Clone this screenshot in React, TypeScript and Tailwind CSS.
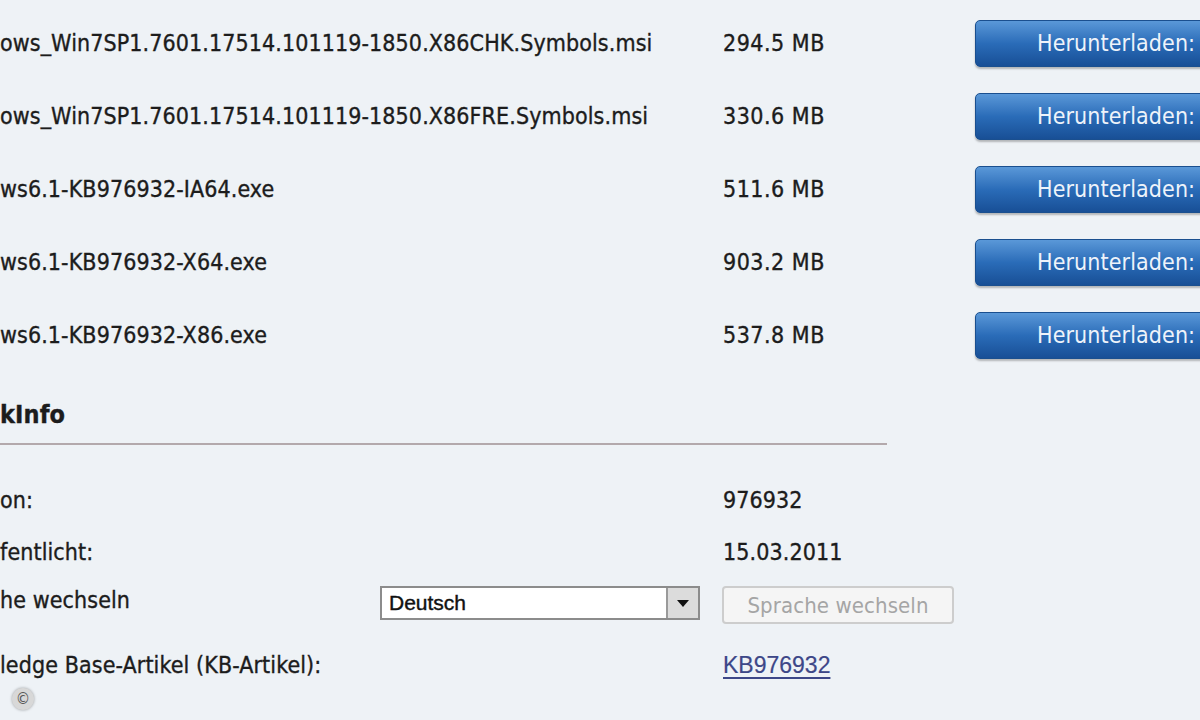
import type { ReactNode } from "react";

const files = [
    { name: "ows_Win7SP1.7601.17514.101119-1850.X86CHK.Symbols.msi", size: "294.5 MB" },
    { name: "ows_Win7SP1.7601.17514.101119-1850.X86FRE.Symbols.msi", size: "330.6 MB" },
    { name: "ws6.1-KB976932-IA64.exe", size: "511.6 MB" },
    { name: "ws6.1-KB976932-X64.exe", size: "903.2 MB" },
    { name: "ws6.1-KB976932-X86.exe", size: "537.8 MB" },
];

function DownloadButton() {
    return (
        <button className="flex h-[47px] w-[260px] shrink-0 items-center rounded-[5px] border border-[#1a4f8f] bg-gradient-to-b from-[#5a98d8] via-[#2a6cb8] to-[#184f96] pl-[61px] text-[23px] tracking-[0.1px] text-[#eef3fa] shadow-[0_2px_2px_rgba(0,0,0,0.25)] [-webkit-text-stroke:0px]">
            Herunterladen:
        </button>
    );
}

function InfoRow({ label, children, className }: { label: string; children: ReactNode; className: string }) {
    return (
        <div className={`flex items-center ${className}`}>
            <div className="w-[723px] shrink-0">{label}</div>
            <div>{children}</div>
        </div>
    );
}

export default function App() {
    return (
        <div
            className="h-[720px] w-[1200px] overflow-hidden bg-[#eef2f6] text-[23px] tracking-[0.1px] text-[#1c1c1c] [-webkit-text-stroke:0.35px_#1c1c1c]"
            style={{ fontFamily: '"DejaVu Sans Condensed", "DejaVu Sans", sans-serif' }}
        >
            <div className="pt-[7px]">
                {files.map((f) => (
                    <div key={f.name} className="flex h-[73px] items-center">
                        <div className="w-[723px] shrink-0 whitespace-nowrap">{f.name}</div>
                        <div className="w-[252px] shrink-0 tracking-[0.5px]">{f.size}</div>
                        <DownloadButton />
                    </div>
                ))}
            </div>

            <div className="mt-[28px] w-[887px]">
                <div className="text-[25px] font-bold leading-[30px]">kInfo</div>
                <div className="mt-[13px] h-[2px] bg-[#b3a9ac]" />
            </div>

            <InfoRow label="on:" className="mt-[40px] h-[30px]">976932</InfoRow>
            <InfoRow label="fentlicht:" className="mt-[22px] h-[30px]">15.03.2011</InfoRow>

            <div className="mt-[16px] flex h-[40px] items-center">
                <div className="-mt-[6px] w-[380px] shrink-0">he wechseln</div>
                <div className="flex h-[34px] w-[320px] shrink-0 border-2 border-[#8c8c8c] bg-white">
                    <div
                        className="flex flex-1 items-center pl-[7px] text-[21px] font-normal tracking-normal text-[#111] [-webkit-text-stroke:0.4px_#111]"
                        style={{ fontFamily: '"Liberation Sans", Arial, sans-serif' }}
                    >
                        Deutsch
                    </div>
                    <div className="flex w-[32px] items-center justify-center border-l-2 border-[#9a9a9a] bg-[#dcdcdc]">
                        <svg width="14" height="9" viewBox="0 0 14 9">
                            <path d="M1 1 L13 1 L7 8 Z" fill="#111" />
                        </svg>
                    </div>
                </div>
                <div className="w-[22px] shrink-0" />
                <button className="mt-[4px] flex h-[38px] w-[232px] items-center justify-center rounded-[4px] border-2 border-[#cdcdcd] bg-[#f5f5f5] text-[22px] text-[#a5a5a5] [-webkit-text-stroke:0px]">
                    Sprache wechseln
                </button>
            </div>

            <InfoRow label="ledge Base-Artikel (KB-Artikel):" className="mt-[27px] h-[30px]">
                <span
                    className="text-[23px] tracking-normal text-[#3d4788] underline decoration-2 underline-offset-[4px] [-webkit-text-stroke:0.2px_#3d4788]"
                    style={{ fontFamily: '"Liberation Sans", Arial, sans-serif' }}
                >
                    KB976932
                </span>
            </InfoRow>

            <div className="ml-[12px] mt-[8px] flex h-[22px] w-[22px] items-center justify-center rounded-full bg-[#d8d8d8] text-[16px] leading-none tracking-normal text-[#555] shadow-[0_0_3px_rgba(0,0,0,0.35)] [-webkit-text-stroke:0px]">
                ©
            </div>
        </div>
    );
}
